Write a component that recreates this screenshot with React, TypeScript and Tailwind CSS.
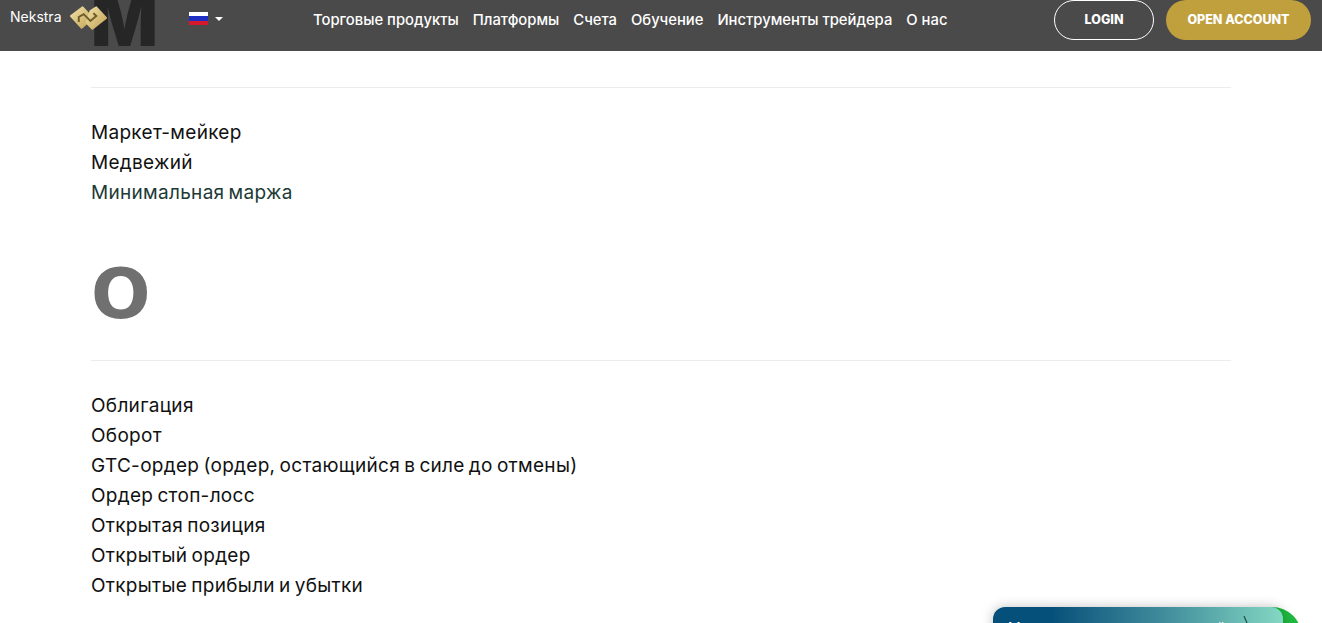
import React from "react";

const navItems = [
  "Торговые продукты",
  "Платформы",
  "Счета",
  "Обучение",
  "Инструменты трейдера",
  "О нас",
];

const sections = [
  {
    letter: "M",
    letterClass: "font-['Inter',sans-serif] font-black",
    terms: ["Маркет-мейкер", "Медвежий", "Минимальная маржа"],
  },
  {
    letter: "O",
    letterClass: "font-['DejaVu_Sans',sans-serif] font-bold",
    terms: [
      "Облигация",
      "Оборот",
      "GTC-ордер (ордер, остающийся в силе до отмены)",
      "Ордер стоп-лосс",
      "Открытая позиция",
      "Открытый ордер",
      "Открытые прибыли и убытки",
    ],
  },
];

const Logo = () => (
  <svg width="37" height="24" viewBox="0 0 38 24" className="ml-[2px] shrink-0">
    <defs>
      <linearGradient id="gold" x1="0" y1="0" x2="1" y2="1">
        <stop offset="0" stopColor="#f0e0a6" />
        <stop offset="1" stopColor="#c2a355" />
      </linearGradient>
    </defs>
    <g fill="url(#gold)" stroke="url(#gold)" strokeWidth="2" strokeLinejoin="round">
      <path d="M1 10 L13 1 L23 12 L12 22 Z" />
      <path d="M21 5 L27 1 L37 12 L23 23 L17 17 Z" />
    </g>
    <path
      d="M9 16 L9 11 L14 8 L21 15 L27 10 L24 7"
      fill="none"
      stroke="#6e5c2c"
      strokeWidth="2"
    />
  </svg>
);

const Flag = () => (
  <span className="flex h-[13px] w-[19px] flex-col overflow-hidden">
    <span className="h-1/3 bg-white" />
    <span className="h-1/3 bg-[#1f2fc4]" />
    <span className="h-1/3 bg-[#d5182b]" />
  </span>
);

const Header = () => (
  <header className="absolute inset-x-0 top-0 z-10 flex h-[51px] items-start bg-[#0d0d0d]/75 font-['Inter',sans-serif] text-white">
    <div className="flex w-[189px] items-start pl-[10px] pt-[6px]">
      <span className="w-[58px] text-[14px] leading-[22px]">Nekstra</span>
      <Logo />
    </div>
    <div className="flex items-center gap-[7px] pt-[12px]">
      <Flag />
      <span className="h-0 w-0 border-x-[4px] border-t-[4px] border-x-transparent border-t-white" />
    </div>
    <nav className="ml-[90px] flex gap-[14px] pt-[10px] text-[14.8px] leading-[20px] font-medium">
      {navItems.map((item) => (
        <a key={item} href="#">
          {item}
        </a>
      ))}
    </nav>
    <div className="ml-auto mr-[11px] flex gap-[12px]">
      <button className="h-[40px] w-[100px] rounded-[20px] border border-white text-[12.5px] font-extrabold">
        LOGIN
      </button>
      <button className="h-[40px] w-[145px] rounded-[20px] bg-[#c09f3d] text-[12.5px] font-extrabold">
        OPEN ACCOUNT
      </button>
    </div>
  </header>
);

const ChatWidget = () => (
  <div className="absolute bottom-[-40px] left-[993px] z-10 h-[56px] w-[309px]">
    <span className="absolute right-0 top-0 h-[60px] w-[60px] rounded-full bg-[#1fb83f]" />
    <div className="relative h-[56px] w-[290px] rounded-t-[12px] bg-gradient-to-r from-[#05507a] from-[20%] via-[#3f8b9b] via-[58%] to-[#84d8c2] pl-[15px] pt-[11px] text-[14px] leading-[20px] text-white shadow-[0_0_12px_rgba(0,0,0,0.25)]">
      Мы можем помочь с торговлей
      <svg width="6" height="8" viewBox="0 0 6 8" className="absolute left-[250px] top-[9px]">
        <path d="M1 0 L4 7" stroke="#1d4f45" strokeWidth="1.2" />
      </svg>
    </div>
  </div>
);

export default function App() {
  return (
    <div className="relative h-screen overflow-hidden bg-white font-['Inter',sans-serif]">
      <Header />
      <main className="mx-[91px] mt-[-22px] w-[1140px]">
        {sections.map((section) => (
          <section key={section.letter} className="mb-[43px]">
            <h2 className={`text-[70px] leading-[86px] text-[#707070] ${section.letterClass}`}>
              {section.letter}
            </h2>
            <div className="mt-[23px] border-t border-[#ececec] pt-[30px]">
              {section.terms.map((term) => (
                <a
                  key={term}
                  href="#"
                  className={
                    term === "Минимальная маржа"
                      ? "block text-[19px] leading-[30px] tracking-[0.3px] [word-spacing:-1.5px] text-[#1b3a36]"
                      : "block text-[19px] leading-[30px] tracking-[0.3px] [word-spacing:-1.5px] text-[#111111]"
                  }
                >
                  {term}
                </a>
              ))}
            </div>
          </section>
        ))}
      </main>
      <ChatWidget />
    </div>
  );
}
